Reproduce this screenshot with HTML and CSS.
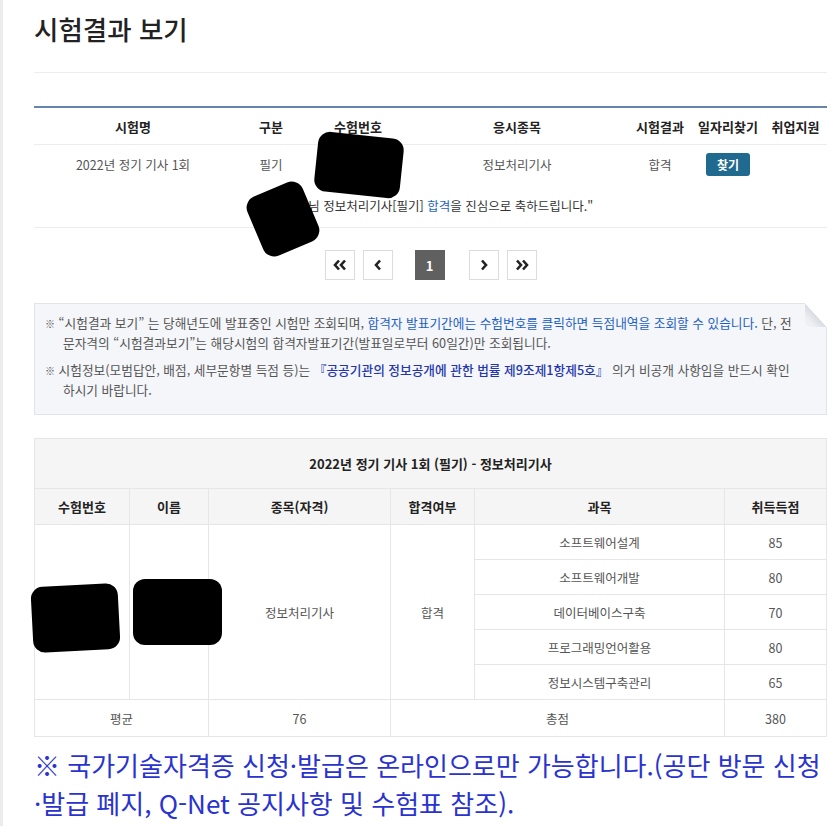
FILE: index.html
```html
<!DOCTYPE html>
<html lang="ko">
<head>
    <meta charset="UTF-8">
    <meta name="viewport" content="width=device-width, initial-scale=1.0">
    <title>시험결과 보기</title>
    <link rel="stylesheet" href="styles.css">
</head>
<body>
    <div class="page">
        <h2 class="page-title">시험결과 보기</h2>
        <div class="title-rule"></div>

        <table class="exam-list">
            <colgroup>
                <col style="width: 198px">
                <col style="width: 78px">
                <col style="width: 96px">
                <col style="width: 222px">
                <col style="width: 64px">
                <col style="width: 72px">
                <col>
            </colgroup>
            <thead>
                <tr>
                    <th>시험명</th>
                    <th>구분</th>
                    <th>수험번호</th>
                    <th>응시종목</th>
                    <th>시험결과</th>
                    <th>일자리찾기</th>
                    <th>취업지원</th>
                </tr>
            </thead>
            <tbody>
                <tr class="exam-row">
                    <td>2022년 정기 기사 1회</td>
                    <td>필기</td>
                    <td></td>
                    <td>정보처리기사</td>
                    <td>합격</td>
                    <td><a class="find-btn" href="#">찾기</a></td>
                    <td></td>
                </tr>
                <tr class="congrats">
                    <td colspan="7">"홍길동님 정보처리기사[필기] <span class="pass">합격</span>을 진심으로 축하드립니다."</td>
                </tr>
            </tbody>
        </table>

        <div class="paging">
            <a class="page-btn" href="#">
                <svg width="14" height="12" viewBox="0 0 14 12"><path d="M6 1.5 2 6l4 4.5M12 1.5 8 6l4 4.5" fill="none" stroke="#222" stroke-width="2.6"/></svg>
            </a>
            <a class="page-btn" href="#">
                <svg width="8" height="12" viewBox="0 0 8 12"><path d="M6 1.5 2 6l4 4.5" fill="none" stroke="#222" stroke-width="2.6"/></svg>
            </a>
            <a class="page-btn current" href="#">1</a>
            <a class="page-btn" href="#">
                <svg width="8" height="12" viewBox="0 0 8 12"><path d="M2 1.5 6 6l-4 4.5" fill="none" stroke="#222" stroke-width="2.6"/></svg>
            </a>
            <a class="page-btn" href="#">
                <svg width="14" height="12" viewBox="0 0 14 12"><path d="M2 1.5 6 6l-4 4.5M8 1.5 12 6l-4 4.5" fill="none" stroke="#222" stroke-width="2.6"/></svg>
            </a>
        </div>

        <div class="notice">
            <p><span class="mark">※</span> “시험결과 보기” 는 당해년도에 발표중인 시험만 조회되며, <span class="link">합격자 발표기간에는 수험번호를 클릭하면 득점내역을 조회할 수 있습니다.</span> 단, 전문자격의 “시험결과보기”는 해당시험의 합격자발표기간(발표일로부터 60일간)만 조회됩니다.</p>
            <p><span class="mark">※</span> 시험정보(모범답안, 배점, 세부문항별 득점 등)는 <span class="law">『공공기관의 정보공개에 관한 법률 제9조제1항제5호』</span> 의거 비공개 사항임을 반드시 확인하시기 바랍니다.</p>
        </div>

        <table class="score">
            <colgroup>
                <col style="width: 95px">
                <col style="width: 79px">
                <col style="width: 182px">
                <col style="width: 84px">
                <col style="width: 250px">
                <col>
            </colgroup>
            <thead>
                <tr class="caption-row">
                    <th colspan="6">2022년 정기 기사 1회 (필기) - 정보처리기사</th>
                </tr>
                <tr class="head-row">
                    <th>수험번호</th>
                    <th>이름</th>
                    <th>종목(자격)</th>
                    <th>합격여부</th>
                    <th>과목</th>
                    <th class="pts-head">취득득점</th>
                </tr>
            </thead>
            <tbody>
                <tr>
                    <td rowspan="5"></td>
                    <td rowspan="5"></td>
                    <td rowspan="5">정보처리기사</td>
                    <td rowspan="5">합격</td>
                    <td>소프트웨어설계</td>
                    <td>85</td>
                </tr>
                <tr><td>소프트웨어개발</td><td>80</td></tr>
                <tr><td>데이터베이스구축</td><td>70</td></tr>
                <tr><td>프로그래밍언어활용</td><td>80</td></tr>
                <tr><td>정보시스템구축관리</td><td>65</td></tr>
                <tr class="total-row">
                    <td colspan="2">평균</td>
                    <td>76</td>
                    <td colspan="2">총점</td>
                    <td>380</td>
                </tr>
            </tbody>
        </table>

        <p class="online-note">※ 국가기술자격증 신청·발급은 온라인으로만 가능합니다.(공단 방문 신청·발급 폐지, Q-Net 공지사항 및 수험표 참조).</p>

        <!-- redaction marks -->
        <span class="blot blot-a"></span>
        <span class="blot blot-b"></span>
        <span class="blot blot-c"></span>
        <span class="blot blot-d"></span>
    </div>
</body>
</html>
```

FILE: styles.css
```css
body {
    margin: 0;
    background: #fff;
    font-family: 'Noto Sans CJK KR', 'Noto Sans', sans-serif;
    color: #555;
}

.page {
    position: relative;
    min-height: 826px;
    padding: 0 9px 0 34px;
    border-left: 3px solid #ececec;
    box-sizing: border-box;
    overflow: hidden;
}

.page-title {
    margin: 0 0 0 -3px;
    padding-top: 9px;
    font-size: 26.5px;
    line-height: 40px;
    font-weight: 500;
    color: #222;
}

.title-rule {
    height: 1px;
    background: #ededed;
    margin: 23px 0 0 -3px;
}

.exam-list {
    width: 793px;
    margin: 33px 0 0 -3px;
    border-collapse: collapse;
    table-layout: fixed;
    border-top: 2px solid #6585ad;
    font-size: 12.5px;
}

.exam-list th,
.exam-list td {
    padding: 0;
    text-align: center;
    white-space: nowrap;
}

.exam-list th {
    height: 36px;
    font-size: 13px;
    font-weight: 700;
    color: #222;
    border-bottom: 1px solid #ececec;
}

.exam-row td {
    height: 38px;
}

.congrats td {
    height: 44px;
    border-bottom: 1px solid #ececec;
    color: #333;
}

.pass {
    color: #1d63c2;
}

.find-btn {
    display: inline-block;
    width: 44px;
    height: 23px;
    line-height: 23px;
    background: #1f6a8e;
    border-radius: 3px;
    color: #fff;
    font-size: 12px;
    font-weight: 700;
    text-decoration: none;
}

.paging {
    display: flex;
    justify-content: center;
    margin: 22px 0 0 -3px;
}

.page-btn {
    width: 30px;
    height: 30px;
    box-sizing: border-box;
    border: 1px solid #dcdcdc;
    display: flex;
    align-items: center;
    justify-content: center;
    text-decoration: none;
    color: #222;
    margin-right: 8px;
}

.page-btn:nth-child(2) {
    margin-right: 22px;
}

.page-btn:last-child {
    margin-right: 0;
}

.page-btn.current {
    background: #606060;
    border-color: #606060;
    color: #fff;
    font-size: 13px;
    font-weight: 700;
    margin-right: 24px;
}

.notice {
    position: relative;
    margin: 23px 0 0 -3px;
    padding: 9px 30px 14px 10px;
    background: #f4f6fa;
    border: 1px solid #e1e4ea;
    font-size: 12.7px;
    line-height: 20px;
    color: #555;
}

.notice::after {
    content: "";
    position: absolute;
    top: -1px;
    right: -1px;
    width: 22px;
    height: 24px;
    background: linear-gradient(to bottom left, #fff 50%, #d9dce2 52%, #eef0f4 80%);
    border-bottom-left-radius: 6px;
}

.notice p {
    margin: 0 0 7px;
    padding-left: 18px;
    text-indent: -18px;
}

.notice p:last-child {
    margin-bottom: 0;
}

.mark {
    font-size: 10px;
    line-height: 1;
}

.link {
    color: #1d5fc4;
}

.law {
    color: #2536ad;
    font-weight: 500;
}

.score {
    width: 793px;
    margin: 23px 0 0 -3px;
    border-collapse: collapse;
    table-layout: fixed;
    font-size: 12.5px;
}

.score th,
.score td {
    padding: 0;
    border: 1px solid #e6e6e6;
    text-align: center;
    white-space: nowrap;
}

.score th {
    background: #f5f5f5;
    color: #222;
    font-weight: 700;
    font-size: 13px;
}

.caption-row th {
    height: 49px;
}

.head-row th {
    height: 35px;
}

.score td {
    height: 34px;
    color: #555;
}

.score .total-row td {
    height: 36px;
}

.pts-head {
    padding-left: 28px;
}

.online-note {
    margin: 9px 0 0 -3px;
    font-size: 26px;
    line-height: 38px;
    color: #2a33cf;
}

.blot {
    position: absolute;
    background: #000;
    border-radius: 12px;
}

.blot-a {
    left: 313px;
    top: 135px;
    width: 86px;
    height: 60px;
    transform: rotate(6deg);
}

.blot-b {
    left: 250px;
    top: 187px;
    width: 60px;
    height: 64px;
    transform: rotate(-23deg);
}

.blot-c {
    left: 29px;
    top: 585px;
    width: 87px;
    height: 66px;
    transform: rotate(-3deg);
}

.blot-d {
    left: 130px;
    top: 579px;
    width: 89px;
    height: 66px;
}
```
